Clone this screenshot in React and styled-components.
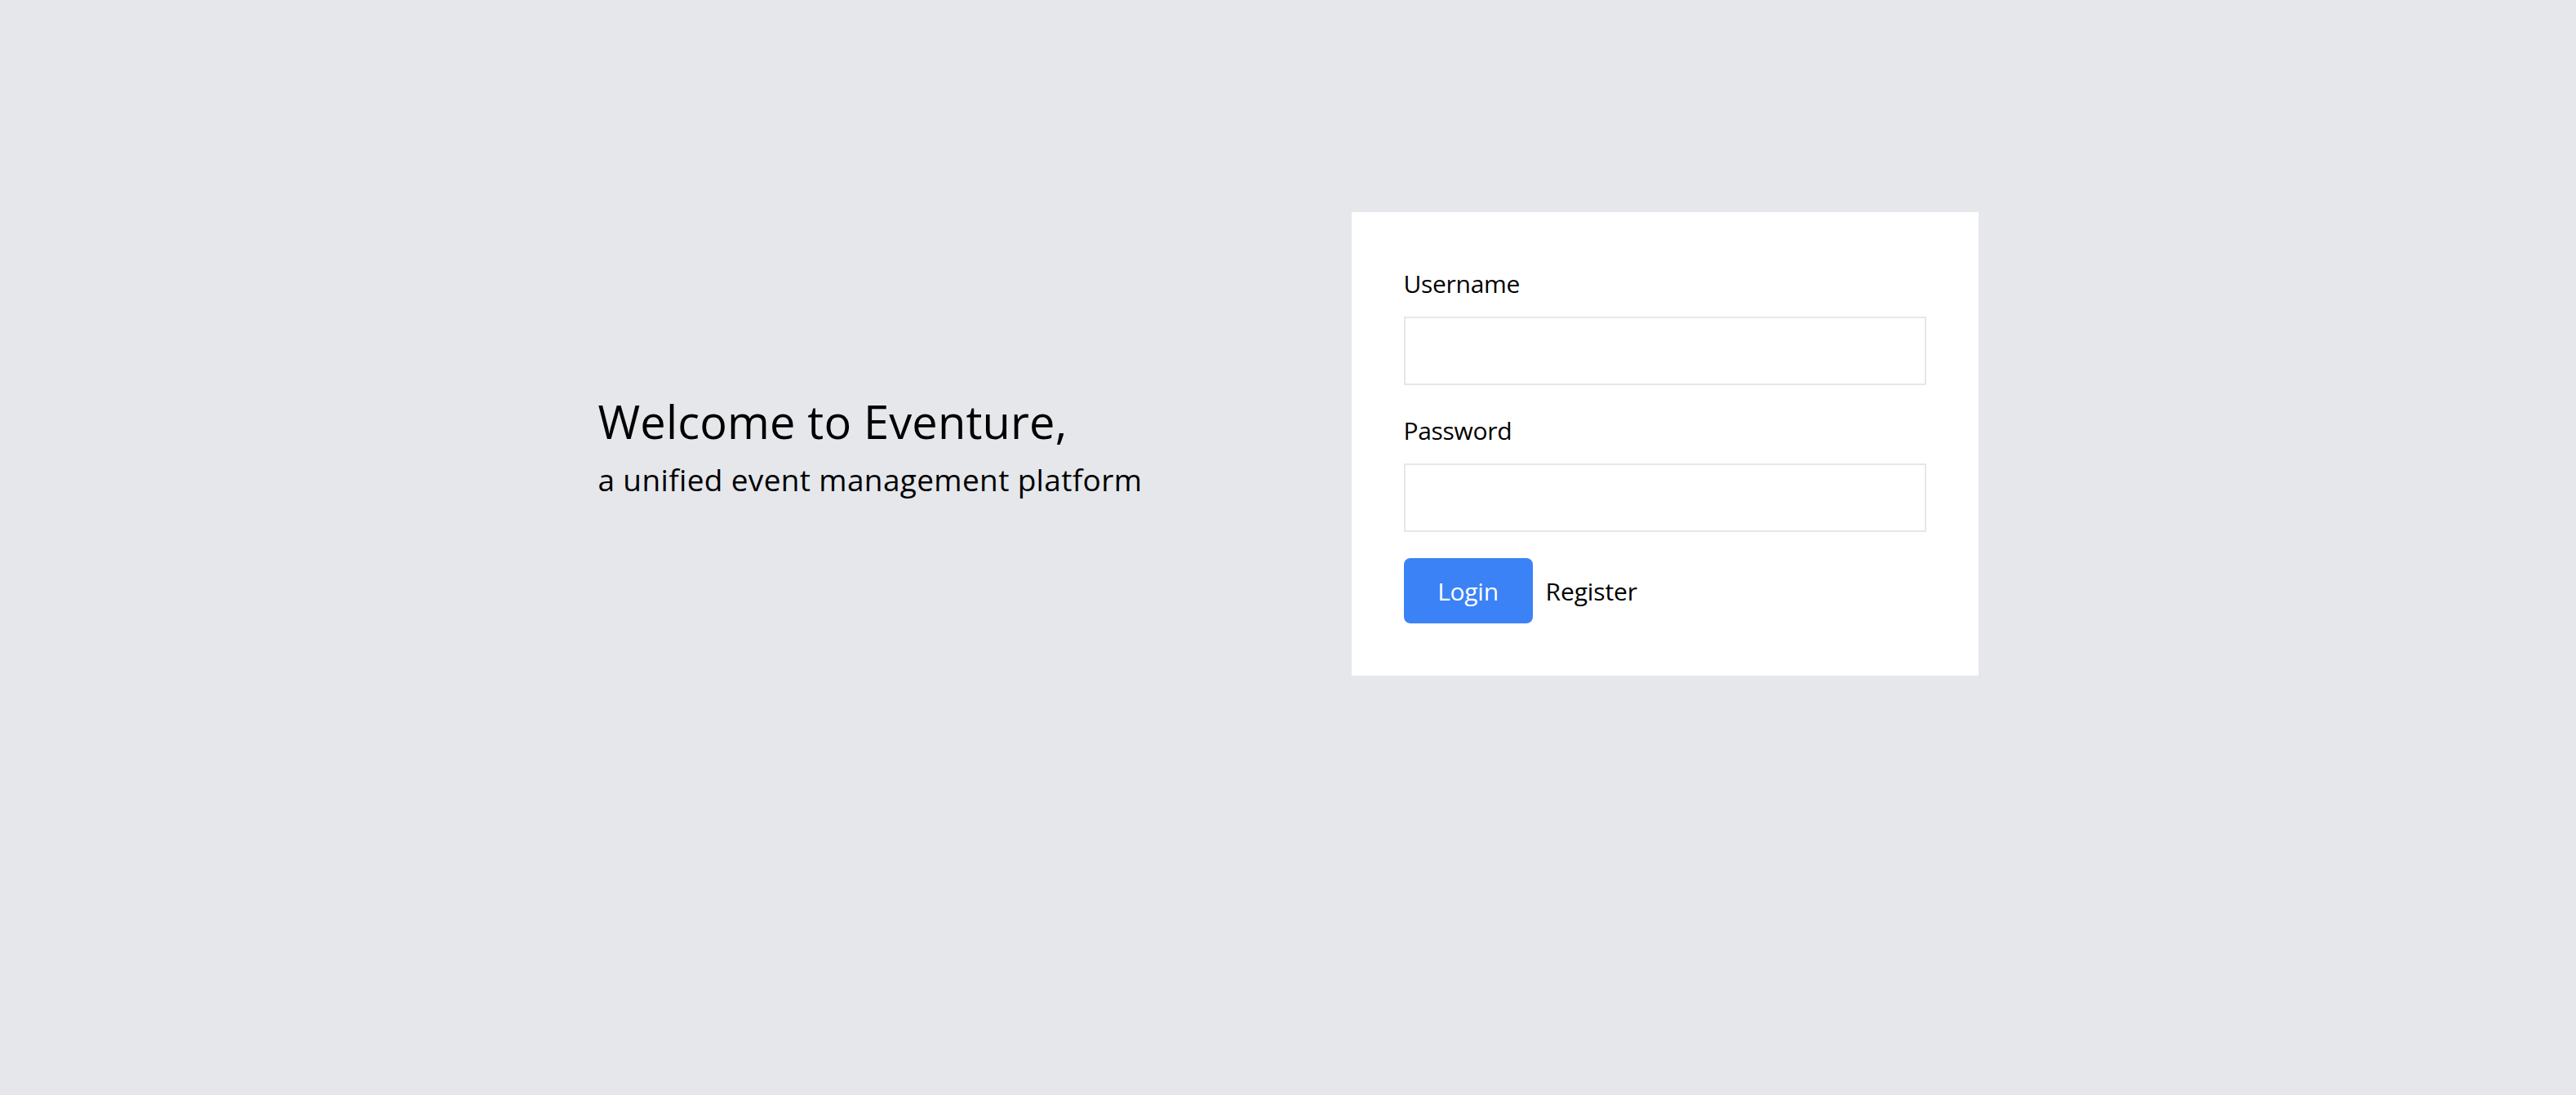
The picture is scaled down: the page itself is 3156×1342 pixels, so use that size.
import React from "react";
import styled, { createGlobalStyle } from "styled-components";

/**
 * Page-wide resets
 */
const GlobalStyle = createGlobalStyle`
  html, body {
    margin: 0;
    padding: 0;
    background: #e5e7eb;
  }

  body {
    font-family: "Open Sans", "Noto Sans", sans-serif;
    color: #000;
  }

  * {
    box-sizing: border-box;
  }
`;

/**
 * Styles the page container
 */
const Page = styled.div`
  min-height: 100vh;
  display: flex;
  justify-content: center;
  align-items: flex-start;
  padding-top: 260px;
`;

/**
 * Holds the intro text and the login card side by side
 */
const Row = styled.div`
  display: flex;
  align-items: center;
`;

/**
 * Styles the intro text column
 */
const Intro = styled.div`
  width: 923px;
  display: flex;
  flex-direction: column;
  padding-top: 8px;
`;

const Title = styled.h1`
  margin: 0;
  font-size: 56px;
  line-height: 72px;
  font-weight: 400;
  letter-spacing: 0.15px;
`;

const Subtitle = styled.p`
  margin: 8px 0 0;
  font-size: 37px;
  line-height: 56px;
  font-weight: 400;
  letter-spacing: 0.35px;
`;

/**
 * Styles the login card
 */
const Card = styled.form`
  width: 768px;
  background: #fff;
  padding: 64px;
  display: flex;
  flex-direction: column;
`;

const Field = styled.div`
  display: flex;
  flex-direction: column;
  margin-bottom: 32px;
`;

const Label = styled.label`
  font-size: 30px;
  line-height: 48px;
  margin-bottom: 16px;
  letter-spacing: -0.3px;
`;

const Input = styled.input`
  width: 100%;
  height: 84px;
  border: 2px solid #e5e7eb;
  background: #fff;
  padding: 16px 24px;
  font-size: 32px;
  font-family: inherit;
  outline: none;
`;

const Actions = styled.div`
  display: flex;
  align-items: center;
  gap: 16px;
`;

const Button = styled.button`
  height: 80px;
  width: 158px;
  border: none;
  border-radius: 8px;
  background: ${props => (props.primary ? "#3b82f6" : "transparent")};
  color: ${props => (props.primary ? "#fff" : "#000")};
  font-family: inherit;
  font-size: 30px;
  letter-spacing: -0.3px;
  padding: 0;
  cursor: pointer;
`;

const TextLink = styled.a`
  font-size: 30px;
  letter-spacing: -0.1px;
  color: #000;
  text-decoration: none;
  cursor: pointer;
`;

const App = () => (
  <>
    <GlobalStyle />
    <Page>
      <Row>
        <Intro>
          <Title>Welcome to Eventure,</Title>
          <Subtitle>a unified event management platform</Subtitle>
        </Intro>
        <Card onSubmit={e => e.preventDefault()}>
          <Field>
            <Label htmlFor="username">Username</Label>
            <Input id="username" type="text" />
          </Field>
          <Field>
            <Label htmlFor="password">Password</Label>
            <Input id="password" type="password" />
          </Field>
          <Actions>
            <Button primary type="submit">
              Login
            </Button>
            <TextLink>Register</TextLink>
          </Actions>
        </Card>
      </Row>
    </Page>
  </>
);

export default App;
